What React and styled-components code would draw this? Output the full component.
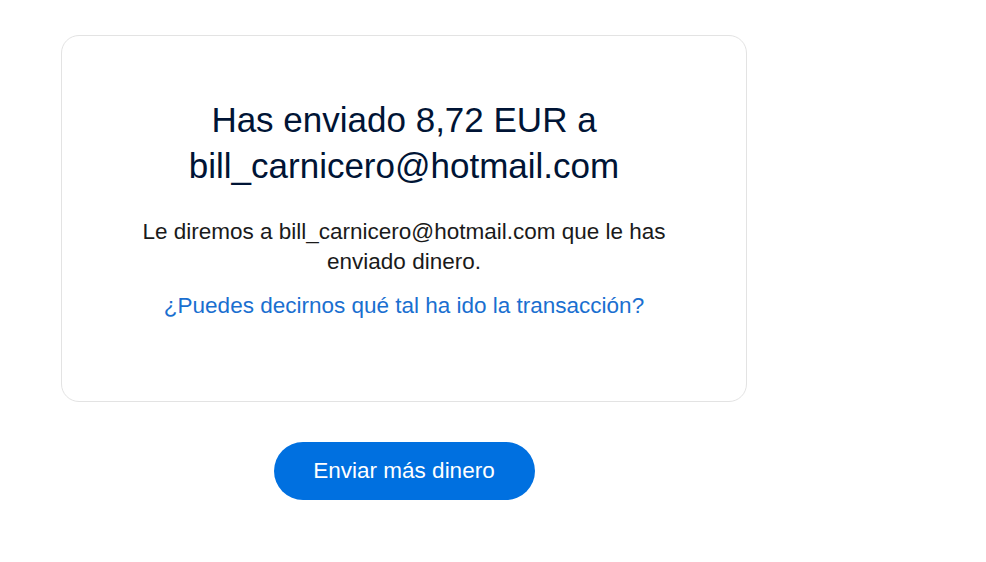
import React from 'react'
import styled, { createGlobalStyle } from 'styled-components'

const GlobalStyle = createGlobalStyle`
  body {
    margin: 0;
    background: #ffffff;
    font-family: "Liberation Sans", Arial, sans-serif;
  }
`;

const Page = styled.div`
  padding: 35px 0 0 61px;
`;

const Column = styled.div`
  width: 686px;
  display: flex;
  flex-direction: column;
  align-items: center;
`;

const Card = styled.div`
  box-sizing: border-box;
  width: 686px;
  height: 367px;
  border: 1px solid #e3e3e3;
  border-radius: 18px;
  padding: 61px 40px 0;
  display: flex;
  flex-direction: column;
  align-items: center;
  text-align: center;
`;

const Title = styled.h1`
  margin: 0;
  max-width: 560px;
  font-size: 35px;
  line-height: 46px;
  font-weight: 400;
  color: #001435;
`;

const Desc = styled.p`
  margin: 28px 0 0;
  max-width: 560px;
  font-size: 22.5px;
  line-height: 30px;
  color: #1a1a1a;
`;

const FeedbackLink = styled.a`
  margin-top: 14px;
  font-size: 22.5px;
  line-height: 30px;
  color: #1a6fd0;
  text-decoration: none;
  cursor: pointer;
`;

const Button = styled.button`
  margin-top: 40px;
  width: 261px;
  height: 58px;
  border: none;
  border-radius: 29px;
  background: #0070e0;
  color: #ffffff;
  font-family: "Liberation Sans", Arial, sans-serif;
  font-size: 22.5px;
  cursor: pointer;
`;

const App = () => {
  return (
    <Page>
      <GlobalStyle />
      <Column>
        <Card>
          <Title>Has enviado 8,72 EUR a bill_carnicero@hotmail.com</Title>
          <Desc>Le diremos a bill_carnicero@hotmail.com que le has enviado dinero.</Desc>
          <FeedbackLink>¿Puedes decirnos qué tal ha ido la transacción?</FeedbackLink>
        </Card>
        <Button>Enviar más dinero</Button>
      </Column>
    </Page>
  )
}

export default App
